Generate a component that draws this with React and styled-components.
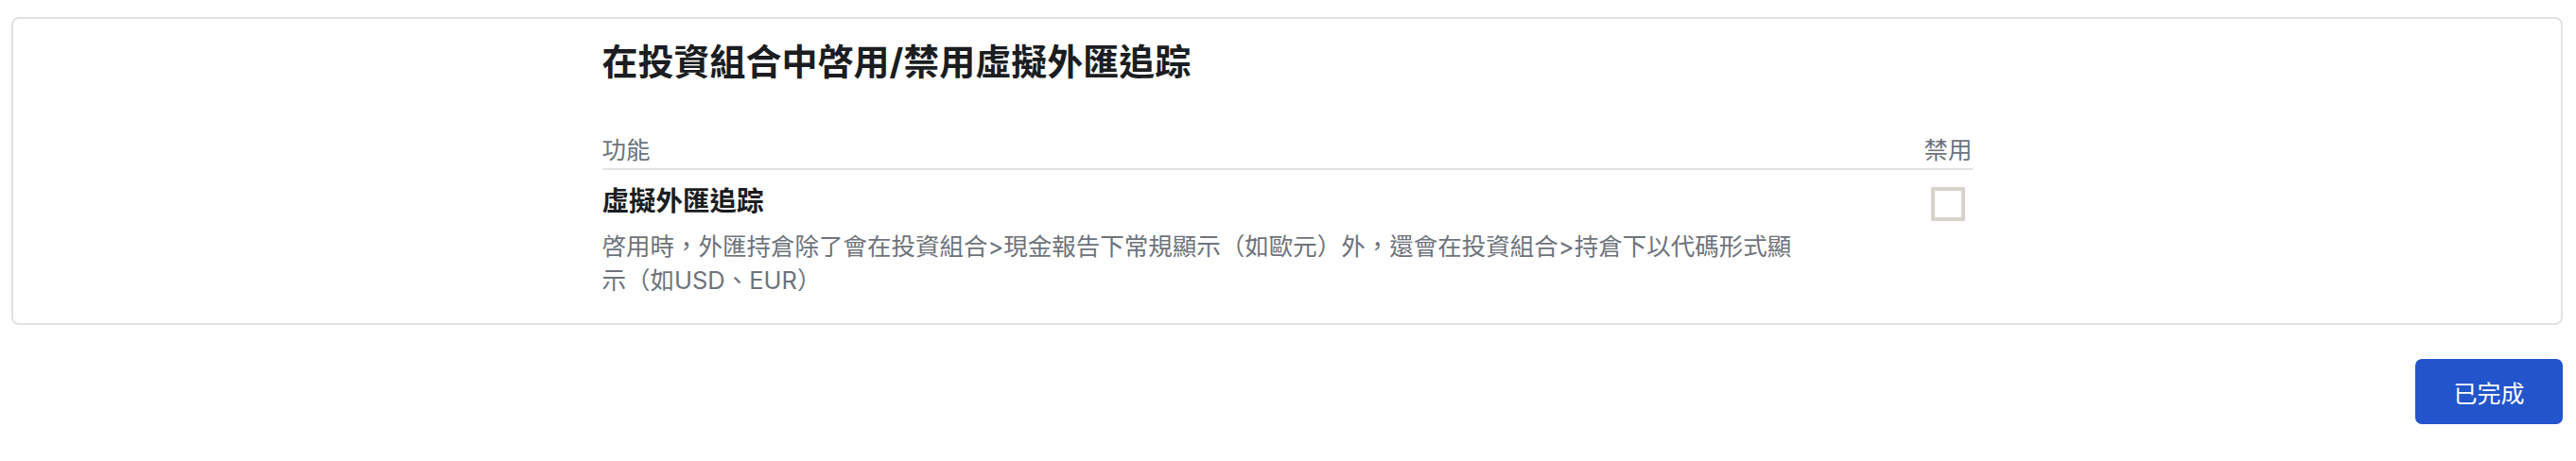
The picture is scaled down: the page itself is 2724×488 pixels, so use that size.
import React, { useState } from "react";
import styled, { createGlobalStyle } from "styled-components";

const GlobalStyle = createGlobalStyle`
  html, body {
    margin: 0;
    padding: 0;
    background: #ffffff;
  }
  body {
    font-family: Inter, "Noto Sans CJK TC", "Noto Sans", sans-serif;
    -webkit-font-smoothing: antialiased;
  }
`;

function App() {
  const [disabled, setDisabled] = useState(false);

  return (
    <Page>
      <GlobalStyle />
      <Card>
        <Content>
          <Title>在投資組合中啓用/禁用虛擬外匯追踪</Title>
          <HeaderRow>
            <HeaderCell>功能</HeaderCell>
            <HeaderCell>禁用</HeaderCell>
          </HeaderRow>
          <FeatureRow>
            <FeatureInfo>
              <FeatureName>虛擬外匯追踪</FeatureName>
              <FeatureDesc>
                啓用時，外匯持倉除了會在投資組合&gt;現金報告下常規顯示（如歐元）外，還會在投資組合&gt;持倉下以代碼形式顯示（如USD、EUR）
              </FeatureDesc>
            </FeatureInfo>
            <CheckCell>
              <CheckBox
                checked={disabled}
                onClick={() => setDisabled(!disabled)}
                aria-label="禁用虛擬外匯追踪"
              />
            </CheckCell>
          </FeatureRow>
        </Content>
      </Card>
      <Footer>
        <DoneBtn>已完成</DoneBtn>
      </Footer>
    </Page>
  );
}

export default App;

const Page = styled.div`
  padding: 18px 14px 0 12px;
`;

const Card = styled.div`
  border: 2px solid #e2e2e2;
  border-radius: 8px;
  padding: 20px 0 27px;
  display: flex;
  justify-content: center;
`;

const Content = styled.div`
  width: 1449px;
  display: flex;
  flex-direction: column;
`;

const Title = styled.h1`
  margin: 0 0 51px;
  font-size: 38px;
  line-height: 50px;
  font-weight: 700;
  color: #1b1d21;
`;

const HeaderRow = styled.div`
  display: grid;
  grid-template-columns: 1fr auto;
  padding-bottom: 2px;
  border-bottom: 2px solid #e3e3e3;
`;

const HeaderCell = styled.div`
  font-size: 25.5px;
  line-height: 35px;
  color: #6e737b;
`;

const FeatureRow = styled.div`
  display: grid;
  grid-template-columns: 1fr 51px;
  padding-top: 13px;
`;

const FeatureInfo = styled.div`
  display: flex;
  flex-direction: column;
  gap: 10px;
`;

const FeatureName = styled.div`
  font-size: 28.5px;
  line-height: 40px;
  font-weight: 700;
  color: #1b1d21;
`;

const FeatureDesc = styled.div`
  max-width: 1265px;
  font-size: 25.5px;
  line-height: 36px;
  color: #6e737b;
`;

const CheckCell = styled.div`
  display: flex;
  justify-content: center;
  padding-top: 5px;
`;

const CheckBox = styled.button`
  width: 36px;
  height: 36px;
  padding: 0;
  border: 4px solid #d6d3cc;
  border-radius: 1px;
  background: ${(p) => (p.checked ? "#2255cc" : "#ffffff")};
  cursor: pointer;
`;

const Footer = styled.div`
  display: flex;
  justify-content: flex-end;
  padding-top: 36px;
`;

const DoneBtn = styled.button`
  width: 156px;
  height: 69px;
  border: none;
  border-radius: 7px;
  background: #2255cc;
  color: #ffffff;
  font-family: Inter, "Noto Sans CJK TC", sans-serif;
  font-size: 25px;
  cursor: pointer;
  &:hover {
    background: #1c49b3;
  }
`;
